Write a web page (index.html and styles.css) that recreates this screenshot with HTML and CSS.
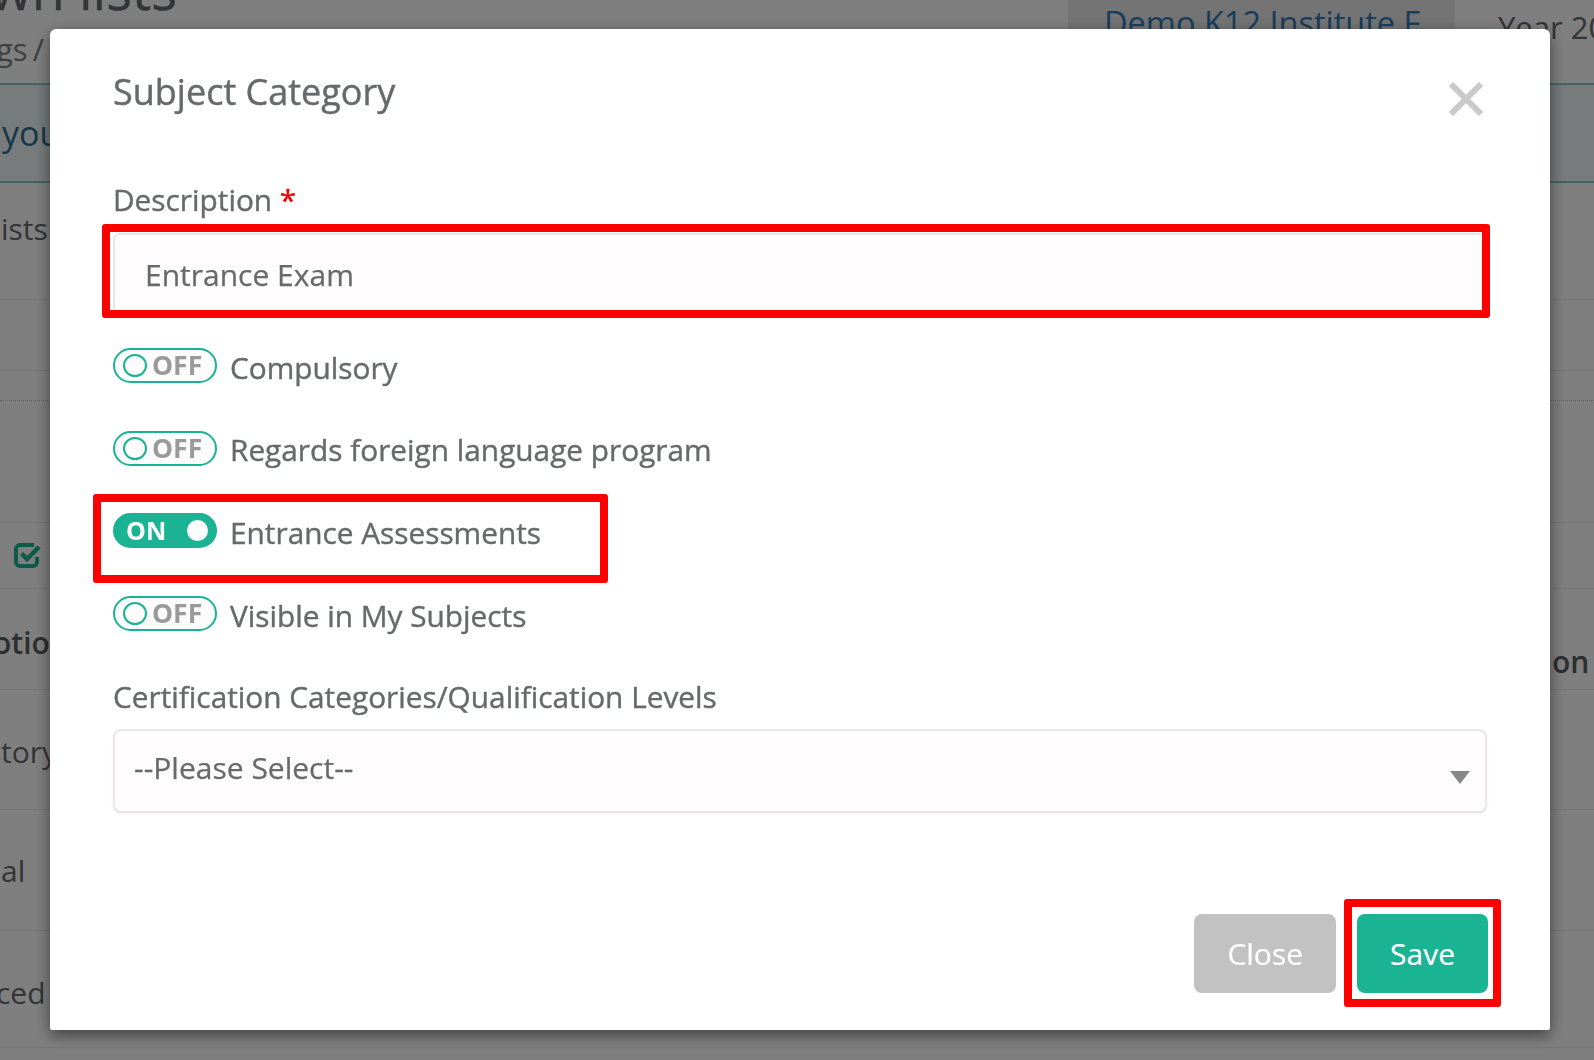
FILE: index.html
```html
<!DOCTYPE html>
<html lang="en">
<head>
<meta charset="utf-8">
<title>Subject Category</title>
<link rel="stylesheet" href="styles.css">
</head>
<body>
<div class="page">
  <div class="bg-top">
    <div class="bg-left">
      <div class="bg-heading">wn lists</div>
      <div class="bg-crumb">gs /</div>
    </div>
    <div class="bg-tab">Demo K12 Institute F</div>
    <div class="bg-year">Year 2021</div>
  </div>
  <div class="bg-alert"><span class="bg-alert-text">you</span></div>
  <div class="bg-row r-ists"><span class="bg-txt">ists</span></div>
  <div class="bg-row r-empty1"></div>
  <div class="bg-row r-dotted"></div>
  <div class="bg-row r-empty2"></div>
  <div class="bg-row r-check">
    <svg class="bg-check" width="30" height="28" viewBox="0 0 30 28">
      <path d="M21 4 H7 a4 4 0 0 0 -4 4 v13 a4 4 0 0 0 4 4 h13 a4 4 0 0 0 4 -4 v-5" fill="none" stroke="#1ab394" stroke-width="4"/>
      <path d="M8.5 12.5 l5.5 5.5 l12 -12" fill="none" stroke="#1ab394" stroke-width="4.5"/>
    </svg>
  </div>
  <div class="bg-row r-otion"><span class="bg-txt bold shift">otion</span><span class="bg-right">on Info</span></div>
  <div class="bg-row r-tory"><span class="bg-txt">tory</span></div>
  <div class="bg-row r-al"><span class="bg-txt">al</span></div>
  <div class="bg-row r-ced"><span class="bg-txt shift2">ced</span></div>
</div>

<div class="backdrop"></div>

<div class="modal">
  <div class="modal-header">
    <h4 class="modal-title">Subject Category</h4>
    <svg class="close-x" width="34" height="34" viewBox="0 0 34 34">
      <path d="M2 2 L32 32 M32 2 L2 32" stroke="#cacaca" stroke-width="6"/>
    </svg>
  </div>

  <div class="modal-body">
    <div class="label first-label">Description <span class="req">*</span></div>
    <div class="field">
      <div class="input">Entrance Exam</div>
      <div class="mark mark-input"></div>
    </div>

    <div class="toggles">
      <div class="toggle-row">
        <span class="switch off"><span class="knob"></span><span class="sw-text">OFF</span></span>
        <span class="toggle-label">Compulsory</span>
      </div>
      <div class="toggle-row">
        <span class="switch off"><span class="knob"></span><span class="sw-text">OFF</span></span>
        <span class="toggle-label">Regards foreign language program</span>
      </div>
      <div class="toggle-row">
        <span class="switch on"><span class="sw-text">ON</span><span class="knob"></span></span>
        <span class="toggle-label">Entrance Assessments</span>
        <div class="mark mark-on"></div>
      </div>
      <div class="toggle-row">
        <span class="switch off"><span class="knob"></span><span class="sw-text">OFF</span></span>
        <span class="toggle-label">Visible in My Subjects</span>
      </div>
    </div>

    <div class="label cert-label">Certification Categories/Qualification Levels</div>
    <div class="select">
      <span class="select-text">--Please Select--</span>
      <span class="caret"></span>
    </div>
  </div>

  <div class="modal-footer">
    <button class="btn btn-close">Close</button>
    <div class="save-wrap">
      <button class="btn btn-save">Save</button>
      <div class="mark mark-save"></div>
    </div>
  </div>
</div>
</body>
</html>
```

FILE: styles.css
```css
html, body {
  margin: 0;
  height: 100%;
  overflow: hidden;
}
body {
  font-family: "Open Sans", "Noto Sans", sans-serif;
  background: #ffffff;
  color: #676a6c;
}

/* ---------- background page ---------- */
.page {
  width: 1594px;
}
.bg-top {
  display: flex;
  height: 83px;
  border-bottom: 2px solid #8cc5d0;
}
.bg-left {
  flex: 0 0 1068px;
  overflow: hidden;
}
.bg-heading {
  font-size: 54px;
  line-height: 54px;
  margin: -38px 0 0 -10px;
  white-space: nowrap;
  -webkit-text-stroke: 0.4px currentColor;
}
.bg-crumb {
  font-size: 31px;
  line-height: 42px;
  margin: 12px 0 0 -4px;
  color: #7e8082;
  white-space: nowrap;
  word-spacing: -3px;
}
.bg-tab {
  flex: 0 0 387px;
  box-sizing: border-box;
  height: 70px;
  background: #e9e9e9;
  padding: 2px 0 0 36px;
  font-size: 32.5px;
  line-height: 42px;
  color: #337ab7;
  white-space: nowrap;
}
.bg-year {
  margin-left: 43px;
  padding-top: 6px;
  font-size: 31px;
  line-height: 42px;
  white-space: nowrap;
}
.bg-alert {
  height: 96px;
  background: #eef6f9;
  border-bottom: 2px solid #8cc5d0;
}
.bg-alert-text {
  display: block;
  padding: 24px 0 0 2px;
  font-size: 34px;
  line-height: 48px;
  color: #31708f;
}
.bg-row {
  display: flex;
  border-bottom: 1px solid #e7eaec;
}
.bg-txt {
  font-size: 30px;
  line-height: 42px;
  white-space: nowrap;
}
.bg-txt.bold { font-weight: 600; color: #5a5c5e; }
.bg-txt.shift { margin-left: -7px; }
.bg-txt.shift2 { margin-left: -4px; }
.bg-right {
  margin-left: auto;
  width: 42px;
  overflow: hidden;
  white-space: nowrap;
  font-size: 30px;
  line-height: 42px;
  font-weight: 600;
  color: #5a5c5e;
  padding-top: 52px;
  height: 42px;
}
.r-ists { height: 116px; }
.r-ists .bg-txt { padding: 25px 0 0 1px; }
.r-empty1 { height: 70px; }
.r-dotted { height: 29px; border-bottom: 1px dotted #c8c8c8; }
.r-empty2 { height: 121px; }
.r-check { height: 65px; }
.bg-check { margin: 18px 0 0 13px; }
.r-otion { height: 100px; }
.r-otion .bg-txt { padding-top: 33px; }
.r-tory { height: 119px; }
.r-tory .bg-txt { padding: 41px 0 0 1px; }
.r-al { height: 120px; }
.r-al .bg-txt { padding: 40px 0 0 1px; }
.r-ced { height: 116px; }
.r-ced .bg-txt { padding-top: 41px; }

.backdrop {
  position: fixed;
  inset: 0;
  background: rgba(0, 0, 0, 0.5);
}

/* ---------- modal ---------- */
.modal {
  position: fixed;
  left: 50px;
  top: 29px;
  width: 1500px;
  height: 1001px;
  box-sizing: border-box;
  padding: 0 63px;
  background: #ffffff;
  border-radius: 6px 6px 2px 2px;
  box-shadow: 0 5px 15px rgba(0, 0, 0, 0.5);
  display: flex;
  flex-direction: column;
}
.modal-header {
  display: flex;
  justify-content: space-between;
  align-items: flex-start;
  padding-top: 41px;
}
.modal-title {
  margin: 0;
  font-size: 36px;
  line-height: 44px;
  font-weight: 400;
  color: #676a6c;
  -webkit-text-stroke: 0.45px currentColor;
}
.close-x {
  margin: 12px 4px 0 0;
}

.label {
  font-size: 29.8px;
  line-height: 42px;
  color: #676a6c;
  -webkit-text-stroke: 0.4px currentColor;
}
.first-label {
  margin-top: 63px;
}
.req {
  color: #f00000;
}
.field {
  position: relative;
  margin-top: 12px;
}
.input {
  box-sizing: border-box;
  height: 84px;
  border: 2px solid #e5e6e7;
  border-radius: 6px;
  background: #fefcfd;
  padding: 0 30px;
  font-size: 30px;
  line-height: 80px;
  color: #676a6c;
  -webkit-text-stroke: 0.25px currentColor;
}

.mark {
  position: absolute;
  border: 8px solid #ff0000;
  border-radius: 3px;
  pointer-events: none;
}
.mark-input {
  left: -11px;
  top: -9px;
  right: -3px;
  bottom: -1px;
}

.toggles {
  display: flex;
  flex-direction: column;
  gap: 47.7px;
  margin-top: 31px;
}
.toggle-row {
  position: relative;
  display: flex;
  align-items: center;
  height: 35px;
}
.switch {
  box-sizing: border-box;
  width: 104px;
  height: 35px;
  border: 2px solid #1ab394;
  border-radius: 18px;
  display: flex;
  align-items: center;
  flex: 0 0 auto;
}
.switch.off {
  background: #fdfcfd;
}
.switch.off .knob {
  box-sizing: border-box;
  width: 24px;
  height: 23px;
  border: 2.5px solid #1ab394;
  border-radius: 50%;
  margin-left: 8px;
}
.switch.off .sw-text {
  margin-left: 5px;
  color: #9a9a9a;
  font-size: 26.5px;
}
.sw-text {
  font-size: 25px;
  line-height: 25px;
  font-weight: 700;
}
.switch.on {
  background: #1ab394;
  justify-content: space-between;
}
.switch.on .sw-text {
  margin-left: 11px;
  color: #ffffff;
}
.switch.on .knob {
  width: 21px;
  height: 21px;
  border-radius: 50%;
  background: #ffffff;
  margin-right: 7px;
}
.toggle-label {
  margin-left: 13px;
  padding-top: 4px;
  font-size: 29.8px;
  line-height: 42px;
  color: #676a6c;
  white-space: nowrap;
  -webkit-text-stroke: 0.4px currentColor;
}
.mark-on {
  left: -20px;
  top: -19px;
  width: 515px;
  height: 89px;
  box-sizing: border-box;
}

.cert-label {
  margin-top: 45px;
}
.select {
  box-sizing: border-box;
  height: 84px;
  margin-top: 11px;
  border: 2px solid #e7e7ea;
  border-radius: 8px;
  background: #fefcfd;
  box-shadow: 0 2px 3px rgba(0, 0, 0, 0.04);
  display: flex;
  align-items: center;
  padding: 0 15px 7px 19px;
}
.select-text {
  flex: 1;
  font-size: 30px;
  line-height: 42px;
  color: #676a6c;
  -webkit-text-stroke: 0.25px currentColor;
}
.caret {
  width: 0;
  height: 0;
  border-left: 10px solid transparent;
  border-right: 10px solid transparent;
  border-top: 13px solid #888888;
  margin-top: 20px;
}

.modal-footer {
  display: flex;
  justify-content: flex-end;
  gap: 21px;
  margin-top: 101px;
  margin-right: -1px;
}
.btn {
  height: 79px;
  padding: 0 33px;
  border: none;
  border-radius: 8px;
  font-family: "Open Sans", "Noto Sans", sans-serif;
  font-size: 30px;
  line-height: 77px;
  color: #ffffff;
  -webkit-text-stroke: 0.2px currentColor;
}
.btn-close {
  background: #c2c2c2;
}
.btn-save {
  background: #1ab394;
  display: block;
}
.save-wrap {
  position: relative;
}
.mark-save {
  left: -13px;
  top: -15px;
  right: -13px;
  bottom: -14px;
}
```
